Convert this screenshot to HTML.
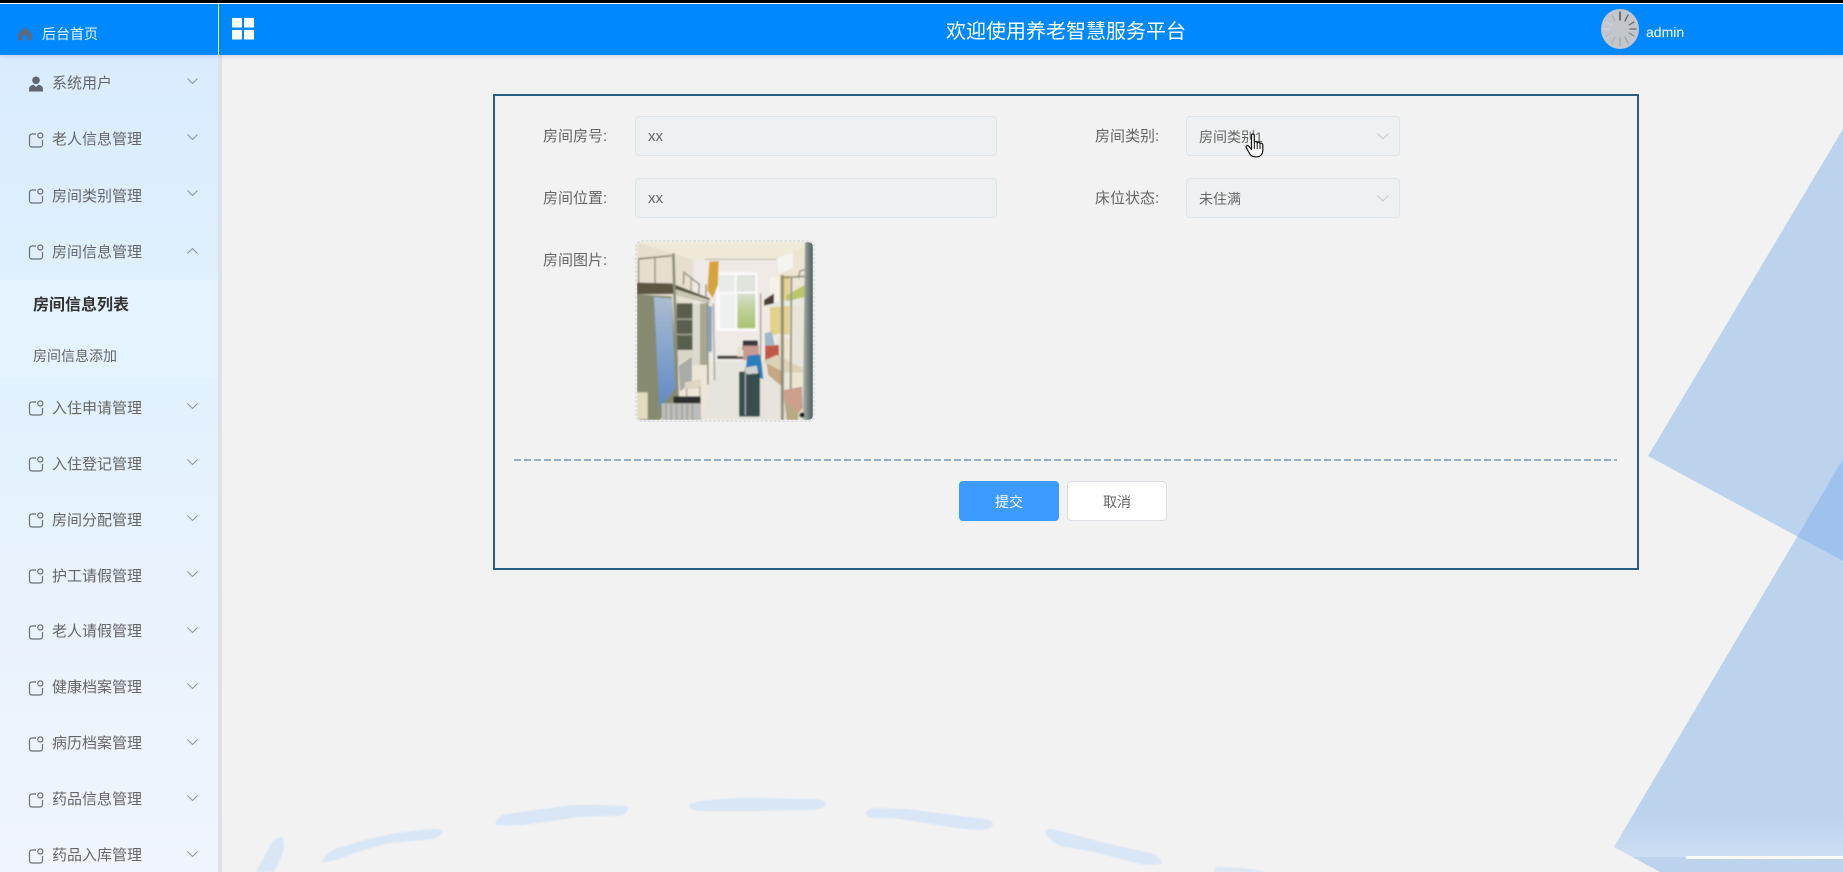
<!DOCTYPE html>
<html lang="zh-CN">
<head>
<meta charset="utf-8">
<title>养老智慧服务平台</title>
<style>
html,body{margin:0;padding:0;width:1843px;height:872px;overflow:hidden;background:#f2f2f2;}
body{position:relative;font-family:"Liberation Sans","Noto Sans CJK SC",sans-serif;color:#666;}
.a{position:absolute;white-space:nowrap;}
.topblack{left:0;top:0;width:1843px;height:3px;background:#000;}
.topwhite{left:0;top:3px;width:1843px;height:1px;background:#fff;}
.header{left:0;top:4px;width:1843px;height:51px;background:#0088ff;box-shadow:0 2px 3px rgba(120,130,170,.22);}
.vline{left:218px;top:4px;width:1px;height:51px;background:#e6f3ff;}
.sidebar{left:0;top:55px;width:218px;height:817px;background:linear-gradient(180deg,#d9ecfe 0%,#e2f1fe 40%,#e9f3fd 70%,#f0f5fd 100%);}
.shadow{left:218px;top:55px;width:4px;height:817px;background:#e0e1e6;}
.subbg{left:0;top:280px;width:218px;height:98px;background:#e4f3ff;}
.m{left:52px;height:28px;line-height:28px;font-size:15px;color:#666;}
.ic{left:28px;width:16px;height:16px;}
.ch{left:187px;width:11px;height:6px;}
.lab{height:28px;line-height:28px;font-size:15px;color:#666;}
.inp{box-sizing:border-box;height:40px;background:#eef1f1;border:1px solid #dde4ea;border-radius:4px;font-size:15px;line-height:40px;color:#666;padding-left:12px;}
.btn{box-sizing:border-box;top:481px;height:40px;border-radius:4px;font-size:14px;line-height:42px;text-align:center;}
</style>
</head>
<body>
<svg width="0" height="0" style="position:absolute">
  <symbol id="mi" viewBox="0 0 16 16"><path d="M8 2H4a2.500 2.500 0 0 0-2.500 2.500v8A2.500 2.500 0 0 0 4 15h8a2.500 2.500 0 0 0 2.500-2.500V8" fill="none" stroke="#6a6d72" stroke-width="1.200"/><circle cx="12.300" cy="3.500" r="2.500" fill="none" stroke="#6a6d72" stroke-width="1.200"/></symbol>
  <symbol id="cd" viewBox="0 0 11 6"><path d="M.5.5 5.500 5.500 10.500.5" fill="none" stroke="#8e9299" stroke-width="1"/></symbol>
</svg>
<svg class="a" style="left:0;top:0" width="1843" height="872" viewBox="0 0 1843 872">
  <defs>
    <linearGradient id="hz" x1="0" y1="0" x2="0" y2="1"><stop offset="0" stop-color="#fff" stop-opacity="0"/><stop offset="1" stop-color="#fff" stop-opacity=".25"/></linearGradient>
    <linearGradient id="bar" x1="0" y1="0" x2="1" y2="0"><stop offset="0" stop-color="#fff"/><stop offset=".5" stop-color="#fff6f0"/><stop offset="1" stop-color="#fff"/></linearGradient>
    <clipPath id="t2"><polygon points="1614,847 1843,459 1843,872 1660,872"/></clipPath>
    <filter id="sf" x="-5%" y="-20%" width="110%" height="140%"><feGaussianBlur stdDeviation=".7"/></filter>
  </defs>
  <g fill="rgba(121,172,232,.45)">
    <polygon points="1648,456 1843,129 1843,561"/>
    <polygon points="1614,847 1843,459 1843,872 1660,872"/>
  </g>
  <rect x="1600" y="815" width="243" height="42" fill="url(#hz)" clip-path="url(#t2)"/>
  <rect x="1686" y="856" width="157" height="3" fill="url(#bar)"/>
  <g fill="#d9e6f5" filter="url(#sf)">
    <path d="M283 837 Q272 838 268 850 L256 872 H274 Q282 858 284 847Z"/>
    <path d="M321 862 Q330 848 345 846 Q385 832 435 829 Q444 830 442 834 Q436 840 424 840 Q400 842 389 843 Q370 848 354 853 Q335 862 321 862Z"/>
    <path d="M495 825 Q497 816 506 814 L551 808 Q575 804 593 805 L626 806 Q630 808 626 813 Q622 817 612 816 Q595 816 579 817 L537 823 Q515 827 495 825Z"/>
    <path d="M689 805 Q695 801 712 800 Q740 797 761 798 L814 799 Q825 799 826 805 Q822 810 808 810 L747 811 L698 811 Q688 809 689 805Z"/>
    <path d="M866 813 Q868 807 877 808 Q905 808 930 812 L984 819 Q993 820 993 825 Q990 830 979 830 Q960 829 937 825 L894 818 Q880 818 873 818 Q866 817 866 813Z"/>
    <path d="M1045 832 Q1047 828 1052 829 Q1080 836 1105 843 L1150 853 Q1160 856 1162 863 Q1152 866 1140 864 L1098 853 Q1080 849 1063 847 Q1050 842 1045 832Z"/>
    <path d="M1215 868 Q1218 866 1224 867 Q1250 868 1266 872 H1215Z"/>
  </g>
</svg>

<div class="a sidebar"></div>
<div class="a subbg"></div>
<div class="a shadow"></div>
<div class="a topblack"></div>
<div class="a topwhite"></div>
<div class="a header"></div>
<div class="a vline"></div>

<svg class="a" style="left:18px;top:27px" width="14" height="14" viewBox="0 0 15 14"><path d="M7.500 0C10 1.500 13 4 15 7v7H10V8.500H5V14H0V7C2 4 5 1.500 7.500 0Z" fill="#5a6a80"/></svg>
<div class="a" style="left:42px;top:20px;height:28px;line-height:28px;font-size:14px;color:#e8f4ff;">后台首页</div>
<svg class="a" style="left:232px;top:18px" width="22" height="22" viewBox="0 0 22 22"><g fill="#fff"><rect x="0" y="0" width="10" height="9.500" rx=".5"/><rect x="12" y="0" width="10" height="9.500" rx=".5"/><rect x="0" y="12" width="10" height="9.500" rx=".5"/><rect x="12" y="12" width="10" height="9.500" rx=".5"/></g></svg>
<div class="a" style="left:946px;top:17px;height:30px;line-height:30px;font-size:20px;color:#fff;">欢迎使用养老智慧服务平台</div>
<svg class="a" style="left:1601px;top:9px" width="38" height="40" viewBox="0 0 38 40">
  <ellipse cx="19" cy="20" rx="19" ry="20" fill="#c3c6cc"/>
  <g stroke-linecap="round">
    <line x1="19" y1="3" x2="19" y2="11" stroke="#333" stroke-width="1.200"/>
    <line x1="27" y1="6" x2="24" y2="12" stroke="#555" stroke-width="1.200"/>
    <line x1="33" y1="13" x2="28" y2="16" stroke="#666" stroke-width="1.200"/>
    <line x1="35" y1="20" x2="29" y2="20" stroke="#777" stroke-width="1.400"/>
    <line x1="33" y1="27" x2="28" y2="24" stroke="#888" stroke-width="1.100"/>
    <line x1="27" y1="34" x2="24" y2="28" stroke="#999" stroke-width="1.100"/>
    <line x1="19" y1="37" x2="19" y2="29" stroke="#999" stroke-width="1"/>
    <line x1="11" y1="34" x2="14" y2="28" stroke="#aaa" stroke-width="1"/>
    <line x1="5" y1="27" x2="10" y2="24" stroke="#b0b0b0" stroke-width="1"/>
    <line x1="3" y1="20" x2="9" y2="20" stroke="#d8d8d8" stroke-width="1"/>
    <line x1="5" y1="13" x2="10" y2="16" stroke="#d8d8d8" stroke-width="1"/>
    <line x1="11" y1="6" x2="14" y2="12" stroke="#aaa" stroke-width="1"/>
  </g>
</svg>
<div class="a" style="left:1646px;top:18px;height:28px;line-height:28px;font-size:14px;color:#fff;">admin</div>

<!-- menu -->
<svg class="a ic" style="top:76px" viewBox="0 0 16 16"><circle cx="8" cy="4.300" r="3.800" fill="#5f6670"/><path d="M1 15.500V13c0-2.600 2.500-4 4.600-4.200L8 11l2.400-2.200C12.500 9 15 10.400 15 13v2.500Z" fill="#5f6670"/></svg>
<div class="a m" style="top:70px">系统用户</div>
<svg class="a ch" style="top:78px"><use href="#cd"/></svg>

<svg class="a ic" style="top:132px"><use href="#mi"/></svg>
<div class="a m" style="top:126px">老人信息管理</div>
<svg class="a ch" style="top:134px"><use href="#cd"/></svg>

<svg class="a ic" style="top:188px"><use href="#mi"/></svg>
<div class="a m" style="top:183px">房间类别管理</div>
<svg class="a ch" style="top:190px"><use href="#cd"/></svg>

<svg class="a ic" style="top:244px"><use href="#mi"/></svg>
<div class="a m" style="top:239px">房间信息管理</div>
<svg class="a ch" style="top:248px" viewBox="0 0 11 6"><path d="M.5 5.500 5.500.5 10.500 5.500" fill="none" stroke="#8e9299" stroke-width="1"/></svg>

<div class="a" style="left:33px;top:292px;height:28px;line-height:28px;font-size:16px;font-weight:bold;color:#333;">房间信息列表</div>
<div class="a" style="left:33px;top:342px;height:28px;line-height:28px;font-size:14px;color:#666;">房间信息添加</div>

<svg class="a ic" style="top:400px"><use href="#mi"/></svg>
<div class="a m" style="top:395px">入住申请管理</div>
<svg class="a ch" style="top:403px"><use href="#cd"/></svg>

<svg class="a ic" style="top:456px"><use href="#mi"/></svg>
<div class="a m" style="top:451px">入住登记管理</div>
<svg class="a ch" style="top:459px"><use href="#cd"/></svg>

<svg class="a ic" style="top:512px"><use href="#mi"/></svg>
<div class="a m" style="top:507px">房间分配管理</div>
<svg class="a ch" style="top:515px"><use href="#cd"/></svg>

<svg class="a ic" style="top:568px"><use href="#mi"/></svg>
<div class="a m" style="top:563px">护工请假管理</div>
<svg class="a ch" style="top:571px"><use href="#cd"/></svg>

<svg class="a ic" style="top:624px"><use href="#mi"/></svg>
<div class="a m" style="top:618px">老人请假管理</div>
<svg class="a ch" style="top:627px"><use href="#cd"/></svg>

<svg class="a ic" style="top:680px"><use href="#mi"/></svg>
<div class="a m" style="top:674px">健康档案管理</div>
<svg class="a ch" style="top:683px"><use href="#cd"/></svg>

<svg class="a ic" style="top:736px"><use href="#mi"/></svg>
<div class="a m" style="top:730px">病历档案管理</div>
<svg class="a ch" style="top:739px"><use href="#cd"/></svg>

<svg class="a ic" style="top:792px"><use href="#mi"/></svg>
<div class="a m" style="top:786px">药品信息管理</div>
<svg class="a ch" style="top:795px"><use href="#cd"/></svg>

<svg class="a ic" style="top:848px"><use href="#mi"/></svg>
<div class="a m" style="top:842px">药品入库管理</div>
<svg class="a ch" style="top:851px"><use href="#cd"/></svg>

<!-- form box -->
<div class="a" style="box-sizing:border-box;left:493px;top:94px;width:1146px;height:476px;border:2px solid #2a5f85;"></div>

<div class="a lab" style="left:543px;top:123px">房间房号:</div>
<div class="a inp" style="left:635px;top:116px;width:362px">xx</div>
<div class="a lab" style="left:1095px;top:123px">房间类别:</div>
<div class="a inp" style="left:1186px;top:116px;width:214px;font-size:14px">房间类别1</div>
<svg class="a" style="left:1377px;top:133px" width="12" height="7" viewBox="0 0 12 7"><path d="M.5.5 6 6 11.500.5" fill="none" stroke="#c4c8ce" stroke-width="1"/></svg>

<div class="a lab" style="left:543px;top:185px">房间位置:</div>
<div class="a inp" style="left:635px;top:178px;width:362px">xx</div>
<div class="a lab" style="left:1095px;top:185px">床位状态:</div>
<div class="a inp" style="left:1186px;top:178px;width:214px;font-size:14px">未住满</div>
<svg class="a" style="left:1377px;top:195px" width="12" height="7" viewBox="0 0 12 7"><path d="M.5.5 6 6 11.500.5" fill="none" stroke="#c4c8ce" stroke-width="1"/></svg>

<div class="a lab" style="left:543px;top:247px">房间图片:</div>

<!-- room photo -->
<svg class="a" style="left:630px;top:235px" width="190" height="190" viewBox="0 0 570 570">
  <defs>
    <clipPath id="ph"><rect x="21" y="21" width="528" height="534" rx="14"/></clipPath>
    <filter id="bl" x="-5%" y="-5%" width="110%" height="110%"><feGaussianBlur stdDeviation="2.400"/></filter>
    <linearGradient id="door" x1="0" y1="0" x2="1" y2="0"><stop offset="0" stop-color="#b4b8b2"/><stop offset=".5" stop-color="#7a8582"/><stop offset="1" stop-color="#47605e"/></linearGradient>
    <linearGradient id="pane" x1="0" y1="0" x2="0" y2="1"><stop offset="0" stop-color="#d6dfd0"/><stop offset=".5" stop-color="#bccf92"/><stop offset="1" stop-color="#aac372"/></linearGradient>
    <linearGradient id="blue" x1="0" y1="0" x2="0" y2="1"><stop offset="0" stop-color="#a9bcd2"/><stop offset="1" stop-color="#5f8ac4"/></linearGradient>
  </defs>
  <rect x="18" y="18" width="534" height="540" rx="16" fill="none" stroke="#cfcfcf" stroke-width="3" stroke-dasharray="8 5"/>
  <g clip-path="url(#ph)"><g filter="url(#bl)">
    <rect x="21" y="21" width="528" height="534" fill="#ece6d8"/>
    <polygon points="21,21 549,21 440,75 190,75" fill="#efe9d9"/>
    <polygon points="190,75 440,75 440,380 190,380" fill="#f0eae6"/>
    <polygon points="21,21 190,75 190,380 21,300" fill="#e6dfd0"/>
    <polygon points="549,21 440,75 440,380 549,500" fill="#ede4d2"/>
    <rect x="225" y="71" width="215" height="4" fill="#c4c0ae"/>
    <rect x="258" y="112" width="124" height="176" fill="#fbfafa"/>
    <rect x="266" y="120" width="48" height="50" fill="#e9ebe8"/>
    <rect x="320" y="120" width="56" height="50" fill="#dfe4dc"/>
    <rect x="270" y="178" width="46" height="102" fill="#eef0ef"/>
    <rect x="322" y="176" width="54" height="104" fill="url(#pane)"/>
    <polygon points="238,80 266,78 264,150 248,190 232,165" fill="#d7a33e"/>
    <polygon points="440,70 488,52 490,98 445,118" fill="#f4f4f1"/>
    <polygon points="215,555 255,380 400,380 510,555" fill="#e6e4dc"/>
    <rect x="262" y="362" width="78" height="10" fill="#4c493e"/>
    <rect x="322" y="335" width="22" height="30" fill="#e6dfcf"/>
    <polygon points="420,128 478,120 478,300 420,300" fill="#e3d289"/>
    <rect x="420" y="125" width="30" height="90" fill="#f4f2e8"/>
    <rect x="488" y="215" width="35" height="175" fill="#e8e4dc"/>
    <!-- left bunk -->
    <polyline points="24,72 125,62" fill="none" stroke="#8b8b72" stroke-width="5"/>
    <line x1="26" y1="72" x2="26" y2="145" stroke="#8b8b72" stroke-width="4"/>
    <line x1="75" y1="68" x2="75" y2="145" stroke="#8b8b72" stroke-width="4"/>
    <polygon points="21,143 125,145 240,190 240,207 130,177 21,178" fill="#5b5642"/>
    <polygon points="135,162 240,195 240,207 135,178" fill="#c9c7b5"/>
    <polyline points="160,150 162,112 208,148 206,178" fill="none" stroke="#8b8b7c" stroke-width="4"/>
    <line x1="183" y1="130" x2="183" y2="168" stroke="#8b8b7c" stroke-width="3"/>
    <line x1="228" y1="148" x2="228" y2="185" stroke="#8b8b7c" stroke-width="4"/>
    <polygon points="21,178 125,184 146,480 90,555 21,555" fill="#858a6f"/>
    <polygon points="72,186 125,190 136,462 88,518" fill="url(#blue)"/>
    <rect x="140" y="205" width="48" height="140" fill="#5a5e4e"/>
    <rect x="140" y="250" width="48" height="5" fill="#9b9c88"/>
    <rect x="140" y="296" width="48" height="5" fill="#9b9c88"/>
    <polygon points="142,345 190,345 190,360 142,390" fill="#d9d6c6"/>
    <polygon points="146,392 186,365 186,440 150,470" fill="#a9aca6"/>
    <rect x="188" y="205" width="22" height="185" fill="#dcdad0"/>
    <rect x="210" y="205" width="22" height="185" fill="#a9a78f"/>
    <polygon points="232,210 246,215 246,350 232,352" fill="#8aa5c8"/>
    <line x1="130" y1="55" x2="143" y2="490" stroke="#8d8d7a" stroke-width="8"/>
    <line x1="232" y1="200" x2="234" y2="448" stroke="#94948a" stroke-width="5"/>
    <line x1="250" y1="205" x2="254" y2="436" stroke="#9c9c94" stroke-width="4"/>
    <polygon points="165,442 212,432 212,460 165,462" fill="#ddd6c3"/>
    <line x1="170" y1="460" x2="170" y2="490" stroke="#8e8e80" stroke-width="3"/>
    <line x1="210" y1="455" x2="210" y2="500" stroke="#8e8e80" stroke-width="3"/>
    <rect x="21" y="472" width="32" height="80" fill="#e0dcc0"/>
    <rect x="130" y="484" width="82" height="28" rx="3" fill="#2f2f2f"/>
    <rect x="95" y="505" width="118" height="50" fill="#bcbdb9"/>
    <g stroke="#93948f" stroke-width="3"><line x1="108" y1="508" x2="108" y2="555"/><line x1="124" y1="508" x2="124" y2="555"/><line x1="140" y1="508" x2="140" y2="555"/><line x1="156" y1="508" x2="156" y2="555"/><line x1="172" y1="508" x2="172" y2="555"/><line x1="188" y1="508" x2="188" y2="555"/></g>
    <!-- luggage -->
    <rect x="338" y="316" width="46" height="30" rx="4" fill="#38383a"/>
    <rect x="340" y="332" width="47" height="44" fill="#c99a92"/>
    <polygon points="352,362 392,358 400,432 345,415" fill="#2b7fba"/>
    <rect x="405" y="330" width="42" height="48" fill="#c15a45"/>
    <polygon points="404,295 425,290 435,332 405,332" fill="#9db8c8"/>
    <rect x="327" y="410" width="63" height="135" rx="4" fill="#36504e"/>
    <rect x="344" y="396" width="4" height="145" fill="#a7aaa6"/>
    <polygon points="345,398 380,392 385,415 350,418" fill="#cfd2d0"/>
    <!-- right bunk -->
    <polygon points="398,212 448,198 525,186 525,210 400,218" fill="#e8e9e3"/>
    <polygon points="468,182 524,150 525,186 470,198" fill="#b9c766"/>
    <polygon points="402,195 432,175 432,205 402,212" fill="#4a3c38"/>
    <polyline points="505,130 510,108 526,104" fill="none" stroke="#8c8c78" stroke-width="4"/>
    <polyline points="455,128 526,124" fill="none" stroke="#8c8c78" stroke-width="5"/>
    <line x1="392" y1="175" x2="392" y2="372" stroke="#9b9b8b" stroke-width="4"/>
    <polygon points="400,378 440,360 520,400 520,412 460,412 405,385" fill="#ddd2b6"/>
    <polygon points="410,385 462,412 462,460 415,420" fill="#c4a783"/>
    <polygon points="440,295 480,300 480,312 440,305" fill="#eeeadf"/>
    <line x1="457" y1="120" x2="457" y2="555" stroke="#8f8f82" stroke-width="9"/>
    <line x1="484" y1="124" x2="482" y2="510" stroke="#9a9a8b" stroke-width="6"/>
    <polygon points="462,465 516,455 518,520 505,535 462,490" fill="#cb9f8a"/>
    <polygon points="462,490 505,535 505,555 470,555" fill="#b9a884"/>
    <polygon points="525,21 549,21 549,555 518,555" fill="url(#door)"/>
    <circle cx="516" cy="540" r="8" fill="#1e1e1e"/>
  </g></g>
</svg>

<!-- divider -->
<div class="a" style="left:514px;top:459px;width:1103px;height:2px;background:repeating-linear-gradient(90deg,#94b0c9 0,#94b0c9 7px,transparent 7px,transparent 10px);"></div>

<div class="a btn" style="left:959px;width:100px;background:#3d9bff;color:#fff;">提交</div>
<div class="a btn" style="left:1067px;width:100px;background:#fff;border:1px solid #dcdfe6;line-height:40px;color:#666;">取消</div>

<!-- cursor -->
<svg class="a" style="left:1245px;top:133px" width="20" height="25" viewBox="0 0 20 25">
  <path d="M6.500 2.200C6.500 .6 9.300 .6 9.300 2.200V9.500C9.500 8.300 12 8.300 12.200 9.800 12.600 8.800 14.800 9 15 10.500 15.500 9.800 17.800 10.100 17.800 12V17C17.800 21 15.500 23.800 12 23.800H9.800C6.800 23.800 5.200 22 4 19.500L1.200 14.500C.5 13 2.600 11.700 3.800 13.200L6.500 16.500Z" fill="#fff" stroke="#111" stroke-width="1.200" stroke-linejoin="round"/>
  <g stroke="#111" stroke-width="1"><line x1="9.300" y1="10" x2="9.300" y2="16"/><line x1="12.200" y1="10" x2="12.200" y2="16"/><line x1="15" y1="11" x2="15" y2="16"/></g>
</svg>
</body>
</html>
